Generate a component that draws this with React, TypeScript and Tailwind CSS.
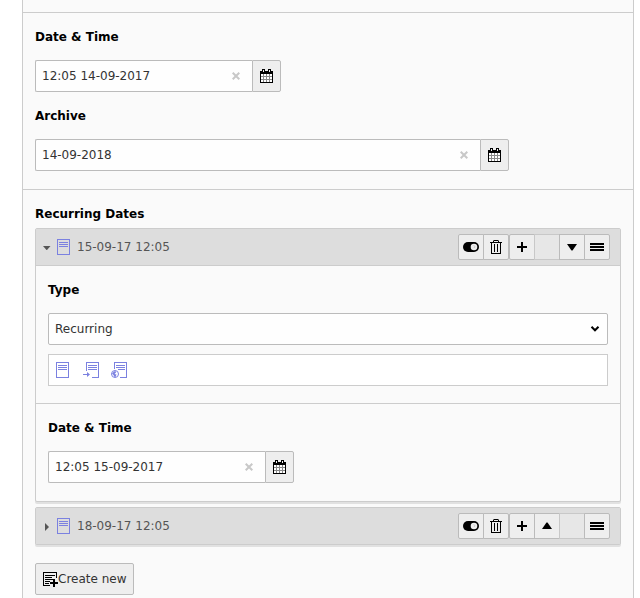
import { useState } from "react";
import type { ReactNode } from "react";

function DocIcon() {
  return (
    <svg width="16" height="16" viewBox="0 0 16 16" fill="none" stroke="#7b81e0" shapeRendering="crispEdges" aria-hidden="true">
      <rect x="1.5" y="0.5" width="12" height="15" />
      <path d="M3 3.5h9M3 5.5h9M3 7.5h9" />
    </svg>
  );
}

function DocArrowIcon() {
  return (
    <svg width="16" height="16" viewBox="0 0 16 16" fill="none" stroke="#7b81e0" aria-hidden="true">
      <path d="M3.5 9V.5h12v15H9M5 3.5h9M5 5.5h9M5 7.5h9" shapeRendering="crispEdges" />
      <path d="M0 12.5h5" shapeRendering="crispEdges" />
      <path d="M4 10l3 2.5L4 15z" fill="#7b81e0" stroke="none" />
    </svg>
  );
}

function DocGlobeIcon() {
  return (
    <svg width="16" height="16" viewBox="0 0 16 16" fill="none" stroke="#7b81e0" aria-hidden="true">
      <path d="M3.5 7V.5h12v15H9M5 3.5h9M5 5.5h9M7 7.5h7" shapeRendering="crispEdges" />
      <circle cx="4" cy="12" r="3.5" />
      <path d="M3 9.500l1.500-.5.5 1.500-1.500 1.500 2 .5-1 2.500H3.500L2.500 13 1 11.500z" fill="#7b81e0" stroke="none" />
    </svg>
  );
}

function CalendarIcon() {
  return (
    <svg width="13" height="14" viewBox="0 0 13 14" shapeRendering="crispEdges" aria-hidden="true">
      <rect x="0.5" y="2.5" width="12" height="11" fill="#fff" stroke="#000" />
      <path d="M0 2h13v3H0z" />
      <path d="M3.500 5v8M6.500 5v8M9.500 5v8M1 7.500h11M1 10.500h11" stroke="#888" />
      <path d="M2.500 3.500v-3h2v3zM8.500 3.500v-3h2v3z" fill="#eee" stroke="#000" />
    </svg>
  );
}

function ToggleIcon() {
  return (
    <svg width="16" height="16" viewBox="0 0 16 16" aria-hidden="true">
      <rect x="0" y="3" width="16" height="10" rx="5" />
      <circle cx="11" cy="8" r="3.300" fill="#eee" />
      <path d="M10.500 6.500l1.500 1-1 1.500" stroke="#ccc" fill="none" />
    </svg>
  );
}

function TrashIcon() {
  return (
    <svg width="16" height="16" viewBox="0 0 16 16" fill="none" stroke="#000" aria-hidden="true">
      <g shapeRendering="crispEdges">
        <path d="M2 3.500h12M6.500 5v8M9.500 5v8" />
        <path d="M3.500 4v10.500h9V4" />
      </g>
      <path d="M5.500 3.500V2q0-.5.5-.5h4q.5 0 .5.5v1.500" />
    </svg>
  );
}

function PlusIcon() {
  return (
    <svg width="16" height="16" viewBox="0 0 16 16" shapeRendering="crispEdges" aria-hidden="true">
      <path d="M7 3h2v4h4v2H9v4H7V9H3V7h4z" />
    </svg>
  );
}

function DownIcon() {
  return (
    <svg width="16" height="16" viewBox="0 0 16 16" aria-hidden="true">
      <path d="M3 5h10l-4.500 6.500h-1z" />
    </svg>
  );
}

function UpIcon() {
  return (
    <svg width="16" height="16" viewBox="0 0 16 16" aria-hidden="true">
      <path d="M3 11h10L8.500 4.500h-1z" />
    </svg>
  );
}

function MenuIcon() {
  return (
    <svg width="16" height="16" viewBox="0 0 16 16" shapeRendering="crispEdges" aria-hidden="true">
      <path d="M1 4h14v2H1zM1 7h14v2H1zM1 10h14v2H1z" />
    </svg>
  );
}

function NewRecordIcon() {
  return (
    <svg width="15" height="16" viewBox="0 0 15 16" shapeRendering="crispEdges" aria-hidden="true">
      <path d="M13.500 7V1.500H.5v13H7" fill="none" stroke="#000" />
      <path d="M2 4.500h10M2 6.500h7M2 8.500h8M2 10.500h5M2 12.500h4" stroke="#000" />
      <path d="M10 8h2v3h3v2h-3v3h-2v-3H7v-2h3z" />
    </svg>
  );
}

function DateField({ id, label, value, wide }: { id: string; label: string; value: string; wide?: boolean }) {
  const [text, setText] = useState(value);
  return (
    <div>
      <label htmlFor={id} className="mb-3.5 block font-bold text-black">
        {label}
      </label>
      <div className={`flex h-8 ${wide ? "max-w-[474px]" : "max-w-[246px]"}`}>
        <div className="relative min-w-0 flex-1">
          <input
            id={id}
            value={text}
            onChange={(e) => setText(e.target.value)}
            className="h-8 w-full rounded-l-xs border border-r-0 border-[#bbb] bg-[#fefefe] pr-7 pl-1.5 text-[#333] outline-none"
          />
          <button
            type="button"
            aria-label="Clear"
            onClick={() => setText("")}
            className="absolute top-2 right-2 flex size-4 items-center justify-center"
          >
            <svg width="8" height="8" viewBox="0 0 8 8" stroke="#c8c8c8" strokeWidth="2" aria-hidden="true">
              <path d="M.7.7l6.600 6.600M7.300.7L.7 7.300" />
            </svg>
          </button>
        </div>
        <button
          type="button"
          aria-label="Open calendar"
          className="flex w-[29px] items-center justify-center rounded-r-xs border border-[#bbb] bg-[#eee]"
        >
          <CalendarIcon />
        </button>
      </div>
    </div>
  );
}

function Tool({ label, children }: { label: string; children: ReactNode }) {
  return (
    <button
      type="button"
      aria-label={label}
      className="-ml-px flex size-[26px] items-center justify-center border border-[#bbb] bg-[#eee] first:ml-0 first:rounded-l-xs last:rounded-r-xs"
    >
      {children}
    </button>
  );
}

function EmptyTool() {
  return <span className="-ml-px size-[26px] border border-[#c8c8c8] bg-[#e7e7e7]" />;
}

function Record({ title, open, position, children }: { title: string; open?: boolean; position: "first" | "last"; children?: ReactNode }) {
  return (
    <section className="rounded-xs border border-[#ccc] bg-[#fafafa] shadow-[0_2px_0_#e1e1e1]">
      <header className="flex h-9 items-center bg-[#ddd] pr-2.5 pl-1.5">
        <button type="button" aria-expanded={!!open} className="flex items-center text-[#555]">
          <svg width="9" height="10" viewBox="0 0 9 10" fill="#555" className="mr-[5px]" aria-hidden="true">
            {open ? <path d="M1 4h7.500L5 8h-.5z" /> : <path d="M3 2l4 4-4 4z" />}
          </svg>
          <DocIcon />
          <span className="ml-[5px]">{title}</span>
        </button>
        <div className="ml-auto flex">
          <div className="flex">
            <Tool label="Toggle visibility"><ToggleIcon /></Tool>
            <Tool label="Delete"><TrashIcon /></Tool>
          </div>
          <div className="flex">
            <Tool label="Add"><PlusIcon /></Tool>
            {position === "first" ? <EmptyTool /> : <Tool label="Move up"><UpIcon /></Tool>}
            {position === "first" ? <Tool label="Move down"><DownIcon /></Tool> : <EmptyTool />}
            <Tool label="Drag"><MenuIcon /></Tool>
          </div>
        </div>
      </header>
      {children}
    </section>
  );
}

export default function App() {
  return (
    <div className="flex min-h-screen bg-white pr-1.5 pl-[22px] font-['Verdana','DejaVu_Sans',sans-serif] text-[12px] leading-[18px]">
      <main className="min-w-0 flex-1 border-x border-[#ccc] bg-[#fafafa] pt-3">
        <div className="flex flex-col gap-[15px] border-t border-[#ccc] px-3 pt-[15px] pb-[18px]">
          <DateField id="datetime" label="Date & Time" value="12:05 14-09-2017" />
          <DateField id="archive" label="Archive" value="14-09-2018" wide />
        </div>
        <div className="border-t border-[#ccc] px-3 pt-[15px] pb-[3px]">
          <h2 className="mb-[5px] font-bold text-black">Recurring Dates</h2>
          <div className="mb-[18px] flex flex-col gap-[5px]">
            <Record title="15-09-17 12:05" open position="first">
              <div className="border-t border-[#ccc] px-3 pt-[15px] pb-[17px]">
                <label htmlFor="type" className="mb-3.5 block font-bold text-black">
                  Type
                </label>
                <div className="relative">
                  <select
                    id="type"
                    defaultValue="Recurring"
                    className="block h-8 w-full appearance-none rounded-xs border border-[#bbb] bg-[#fefefe] pr-6 pl-1.5 text-[#333] outline-none"
                  >
                    <option>Recurring</option>
                  </select>
                  <svg width="10" height="6" viewBox="0 0 10 6" fill="none" stroke="#000" strokeWidth="2" className="pointer-events-none absolute top-[13px] right-2" aria-hidden="true">
                    <path d="M1.500.8L5 4.300 8.500.8" />
                  </svg>
                </div>
                <div className="mt-[9px] flex h-8 items-center gap-3 border border-[#ccc] bg-white px-1.5">
                  <button type="button" aria-label="Record"><DocIcon /></button>
                  <button type="button" aria-label="Shortcut"><DocArrowIcon /></button>
                  <button type="button" aria-label="External link"><DocGlobeIcon /></button>
                </div>
              </div>
              <div className="border-t border-[#ccc] px-3 pt-[15px] pb-[18px]">
                <DateField id="recurring-datetime" label="Date & Time" value="12:05 15-09-2017" />
              </div>
            </Record>
            <Record title="18-09-17 12:05" position="last" />
          </div>
          <button type="button" className="flex h-8 items-center rounded-xs border border-[#bbb] bg-[#eee] pr-1.5 pl-[7px] text-[#333]">
            <NewRecordIcon />
            Create new
          </button>
        </div>
      </main>
    </div>
  );
}
